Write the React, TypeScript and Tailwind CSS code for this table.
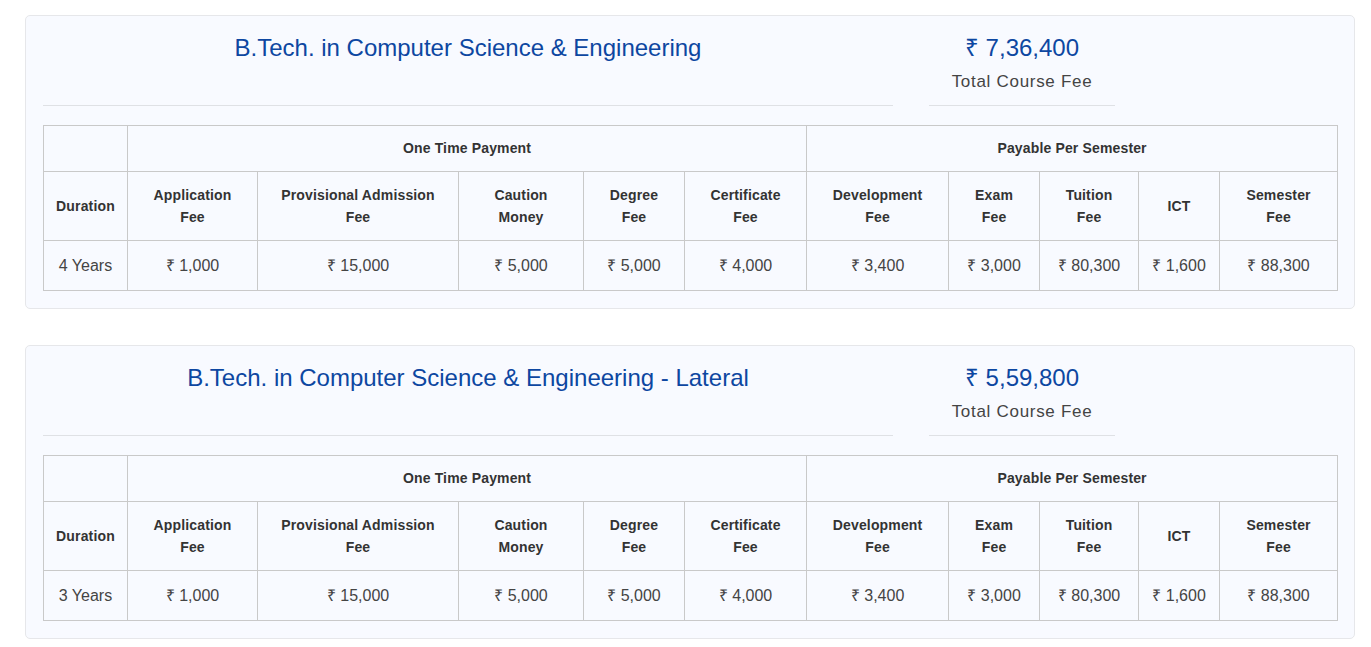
import React from "react";

type Course = { title: string; total: string; duration: string };

const courses: Course[] = [
  { title: "B.Tech. in Computer Science & Engineering", total: "₹ 7,36,400", duration: "4 Years" },
  { title: "B.Tech. in Computer Science & Engineering - Lateral", total: "₹ 5,59,800", duration: "3 Years" },
];

const colWidths = [84, 130, 201, 125, 101, 122, 142, 91, 99, 81, 118];

const headers: [string, string][] = [
  ["Application", "Fee"],
  ["Provisional Admission", "Fee"],
  ["Caution", "Money"],
  ["Degree", "Fee"],
  ["Certificate", "Fee"],
  ["Development", "Fee"],
  ["Exam", "Fee"],
  ["Tuition", "Fee"],
];

const values = ["₹ 1,000", "₹ 15,000", "₹ 5,000", "₹ 5,000", "₹ 4,000", "₹ 3,400", "₹ 3,000", "₹ 80,300", "₹ 1,600", "₹ 88,300"];

const cell = "border border-[#c9c9c9] text-center align-middle p-0";
const th = "font-bold text-[14px] leading-[22px] text-[#333333] tracking-[0.15px]";
const td = "text-[16px] leading-[24px] text-[#444444]";

function FeeCard({ c }: { c: Course }) {
  return (
    <div className="w-[1330px] ml-[25px] rounded-[5px] border border-[#e6e7ea] bg-[#f8faff] px-[17px] pt-[17px] pb-[17px]">
      <div className="flex items-stretch">
        <div className="w-[850px] flex flex-col">
          <div className="text-center text-[24px] leading-[29px] text-[#0d47a1]">{c.title}</div>
          <div className="mt-auto h-px bg-[#dfe1e5]" />
        </div>
        <div className="ml-[36px] w-[186px] flex flex-col">
          <div className="text-center text-[24px] leading-[29px] text-[#0d47a1]">{c.total}</div>
          <div className="mt-[8px] text-center text-[17px] leading-[24px] tracking-[0.7px] text-[#444444]">Total Course Fee</div>
          <div className="mt-[11px] h-px bg-[#dfe1e5]" />
        </div>
      </div>
      <table className="mt-[19px] w-[1294px] table-fixed border-collapse">
        <colgroup>
          {colWidths.map((w, i) => (
            <col key={i} style={{ width: w }} />
          ))}
        </colgroup>
        <tbody>
          <tr className="h-[46px]">
            <td className={cell}></td>
            <td className={`${cell} ${th} pb-[2px]`} colSpan={5}>One Time Payment</td>
            <td className={`${cell} ${th} pb-[2px]`} colSpan={5}>Payable Per Semester</td>
          </tr>
          <tr className="h-[69px]">
            <td className={`${cell} ${th}`}>Duration</td>
            {headers.map(([a, b], i) => (
              <td key={i} className={`${cell} ${th}`}>
                {a}
                <br />
                {b}
              </td>
            ))}
            <td className={`${cell} ${th}`}>ICT</td>
            <td className={`${cell} ${th}`}>
              Semester
              <br />
              Fee
            </td>
          </tr>
          <tr className="h-[50px]">
            <td className={`${cell} ${td}`}>{c.duration}</td>
            {values.map((v, i) => (
              <td key={i} className={`${cell} ${td}`}>{v}</td>
            ))}
          </tr>
        </tbody>
      </table>
    </div>
  );
}

export default function App() {
  return (
    <div className="min-h-[647px] bg-white pt-[15px] font-['Liberation_Sans',Arial,sans-serif]">
      <div className="flex flex-col gap-[36px]">
        {courses.map((c, i) => (
          <FeeCard key={i} c={c} />
        ))}
      </div>
    </div>
  );
}
